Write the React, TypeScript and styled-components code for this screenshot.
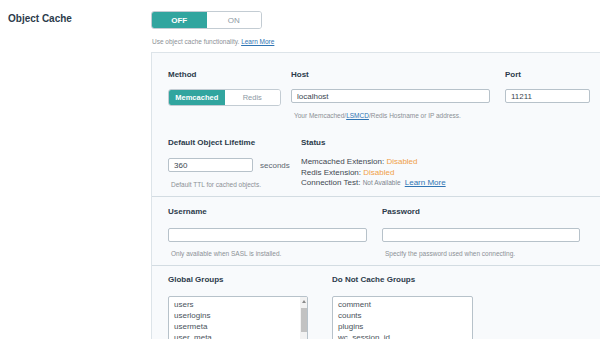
import React from "react";
import styled, { createGlobalStyle } from "styled-components";

const GlobalStyle = createGlobalStyle`
  html, body {
    margin: 0;
    padding: 0;
    background: #ffffff;
    overflow: hidden;
    height: 339px;
  }
  body {
    font-family: "Liberation Sans", Arial, sans-serif;
    color: #333;
  }
`;

const teal = "#31a59f";

const globalGroups = [
  "users",
  "userlogins",
  "usermeta",
  "user_meta",
  "site-transient",
  "site-options",
  "blog-lookup",
  "blog-details",
  "rss",
  "global-posts",
];

const doNotCache = ["comment", "counts", "plugins", "wc_session_id"];

const App: React.FC = () => {
  return (
    <>
      <GlobalStyle />
      <SettingRow>
        <SettingLabel>Object Cache</SettingLabel>
        <SettingBody>
          <Switch width={111} height={18}>
            <SwitchOption active fontSize={8}>OFF</SwitchOption>
            <SwitchOption fontSize={8}>ON</SwitchOption>
          </Switch>
          <Help indent={1} top={8}>
            Use object cache functionality. <HelpLink>Learn More</HelpLink>
          </Help>

          <Panel>
            <Section bottom={7}>
              <FieldGrid columns="123px 214px 1fr">
                <Field>
                  <Label>Method</Label>
                  <Switch width={113} height={17}>
                    <SwitchOption active fontSize={7.5}>Memcached</SwitchOption>
                    <SwitchOption fontSize={7.5}>Redis</SwitchOption>
                  </Switch>
                </Field>
                <Field>
                  <Label>Host</Label>
                  <TextInput width={199} defaultValue="localhost" />
                  <Help>
                    Your Memcached/<HelpLink>LSMCD</HelpLink>/Redis Hostname or IP
                    address.
                  </Help>
                </Field>
                <Field>
                  <Label>Port</Label>
                  <TextInput width={85} defaultValue="11211" />
                </Field>
              </FieldGrid>

              <FieldGrid columns="133px 1fr" top={18}>
                <Field>
                  <Label>Default Object Lifetime</Label>
                  <InputLine>
                    <TextInput width={85} defaultValue="360" />
                    <Unit>seconds</Unit>
                  </InputLine>
                  <Help>Default TTL for cached objects.</Help>
                </Field>
                <Field>
                  <Label spacing={9}>Status</Label>
                  <StatusLine>
                    Memcached Extension: <Warn>Disabled</Warn>
                  </StatusLine>
                  <StatusLine>
                    Redis Extension: <Warn>Disabled</Warn>
                  </StatusLine>
                  <StatusLine>
                    Connection Test: <Muted>Not Available</Muted>{" "}
                    <StatusLink>Learn More</StatusLink>
                  </StatusLine>
                </Field>
              </FieldGrid>
            </Section>

            <Section top={10} bottom={7}>
              <FieldGrid columns="214px 1fr">
                <Field>
                  <Label spacing={11}>Username</Label>
                  <TextInput width={199} />
                  <Help top={7}>Only available when SASL is installed.</Help>
                </Field>
                <Field>
                  <Label spacing={11}>Password</Label>
                  <TextInput width={198} type="password" />
                  <Help top={7}>Specify the password used when connecting.</Help>
                </Field>
              </FieldGrid>
            </Section>

            <Section top={9} bottom={0} last>
              <FieldGrid columns="164px 1fr">
                <Field>
                  <Label spacing={11}>Global Groups</Label>
                  <GroupBox width={140}>
                    {globalGroups.map((g) => (
                      <GroupItem key={g}>{g}</GroupItem>
                    ))}
                    <ScrollTrack>
                      <ScrollArrow />
                      <ScrollThumb />
                    </ScrollTrack>
                  </GroupBox>
                </Field>
                <Field>
                  <Label spacing={11}>Do Not Cache Groups</Label>
                  <GroupBox width={141}>
                    {doNotCache.map((g) => (
                      <GroupItem key={g}>{g}</GroupItem>
                    ))}
                  </GroupBox>
                </Field>
              </FieldGrid>
            </Section>
          </Panel>
        </SettingBody>
      </SettingRow>
    </>
  );
};

export default App;

const SettingRow = styled.div`
  display: flex;
  align-items: flex-start;
  padding-top: 11px;
  width: 600px;
`;

const SettingLabel = styled.div`
  width: 143px;
  padding-left: 8px;
  margin-top: 2px;
  font-size: 10px;
  line-height: 12px;
  font-weight: 700;
  color: #2c3b4b;
`;

const SettingBody = styled.div`
  flex: 1;
  min-width: 0;
`;

const Switch = styled.div<{ width: number; height: number }>`
  display: flex;
  width: ${(p) => p.width}px;
  height: ${(p) => p.height}px;
  box-sizing: border-box;
  border: 1px solid #c3ccd3;
  border-radius: 3px;
  overflow: hidden;
  background: #fff;
`;

const SwitchOption = styled.div<{ active?: boolean; fontSize: number }>`
  flex: 1;
  display: flex;
  align-items: center;
  justify-content: center;
  font-size: ${(p) => p.fontSize}px;
  font-weight: ${(p) => (p.active ? 700 : 400)};
  color: ${(p) => (p.active ? "#ffffff" : "#8d9aa5")};
  background: ${(p) => (p.active ? teal : "#ffffff")};
`;

const Help = styled.div<{ indent?: number; top?: number }>`
  margin-top: ${(p) => p.top ?? 8}px;
  padding-left: ${(p) => p.indent ?? 3}px;
  font-size: 6.5px;
  line-height: 9px;
  color: #8b9095;
  white-space: nowrap;
`;

const HelpLink = styled.a`
  color: #2f74b3;
  text-decoration: underline;
`;

const Panel = styled.div`
  margin-top: 6px;
  margin-right: -20px;
  background: #f8fafc;
  border: 1px solid #dde4e9;
  border-right: none;
  height: 300px;
  overflow: hidden;
`;

const Section = styled.div<{ top?: number; bottom: number; last?: boolean }>`
  padding: ${(p) => p.top ?? 17}px 0 ${(p) => p.bottom}px 16px;
  border-bottom: ${(p) => (p.last ? "none" : "1px solid #d3dce2")};
`;

const FieldGrid = styled.div<{ columns: string; top?: number }>`
  display: grid;
  grid-template-columns: ${(p) => p.columns};
  margin-top: ${(p) => p.top ?? 0}px;
`;

const Field = styled.div`
  display: flex;
  flex-direction: column;
  align-items: flex-start;
`;

const Label = styled.div<{ spacing?: number }>`
  font-size: 8px;
  line-height: 10px;
  font-weight: 700;
  color: #2c3b4b;
  margin-bottom: ${(p) => p.spacing ?? 9}px;
`;

const TextInput = styled.input<{ width: number }>`
  width: ${(p) => p.width}px;
  height: 14px;
  box-sizing: border-box;
  border: 1px solid #b7c2ca;
  border-radius: 2px;
  background: #fff;
  padding: 0 5px;
  margin: 0;
  font-family: "Liberation Sans", Arial, sans-serif;
  font-size: 8px;
  color: #3b4650;
  outline: none;
`;

const InputLine = styled.div`
  display: flex;
  align-items: center;
  gap: 7px;
  margin-top: 1px;
`;

const Unit = styled.span`
  font-size: 8px;
  color: #5d6770;
`;

const StatusLine = styled.div`
  font-size: 8px;
  line-height: 10.5px;
  color: #3e4750;
  white-space: nowrap;
`;

const Warn = styled.span`
  color: #f0a048;
`;

const Muted = styled.span`
  font-size: 6.5px;
  color: #7c858d;
`;

const StatusLink = styled.a`
  color: #2f74b3;
  text-decoration: underline;
  font-size: 8px;
  margin-left: 2px;
`;

const GroupBox = styled.div<{ width: number }>`
  position: relative;
  width: ${(p) => p.width}px;
  height: 90px;
  box-sizing: border-box;
  border: 1px solid #b7c2ca;
  border-radius: 2px;
  background: #fff;
  padding: 2px 5px;
  overflow: hidden;
`;

const GroupItem = styled.div`
  font-size: 8px;
  line-height: 11px;
  color: #4a535b;
`;

const ScrollTrack = styled.div`
  position: absolute;
  top: 0;
  right: 0;
  bottom: 0;
  width: 7px;
  background: #f2f2f2;
  display: flex;
  flex-direction: column;
  align-items: center;
`;

const ScrollArrow = styled.div`
  margin-top: 3px;
  width: 0;
  height: 0;
  border-left: 2px solid transparent;
  border-right: 2px solid transparent;
  border-bottom: 3px solid #8a8a8a;
`;

const ScrollThumb = styled.div`
  margin-top: 5px;
  width: 6px;
  height: 24px;
  background: #c2c2c2;
`;
